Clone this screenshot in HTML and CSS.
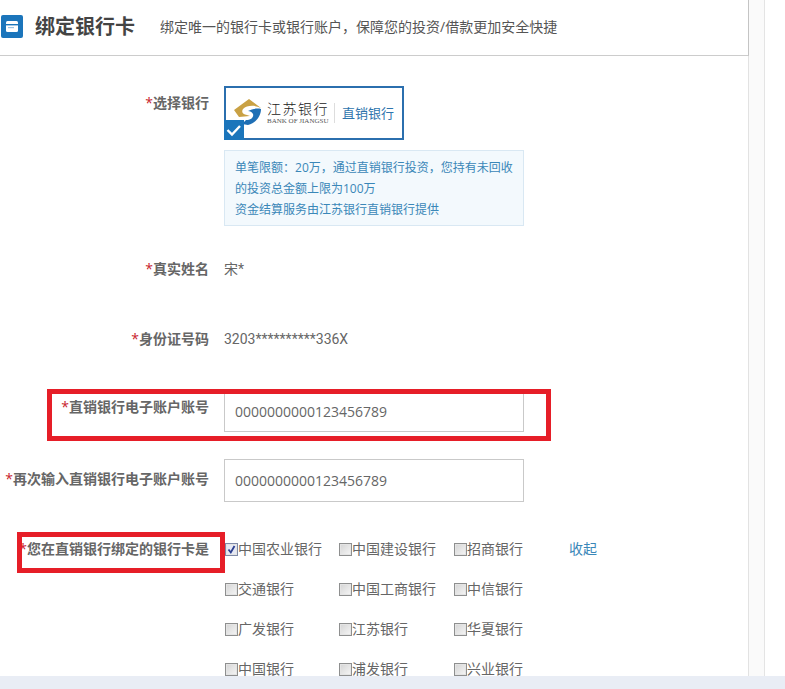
FILE: index.html
```html
<!DOCTYPE html>
<html lang="zh-CN">
<head>
<meta charset="utf-8">
<title>绑定银行卡</title>
<link rel="stylesheet" href="styles.css">
</head>
<body>
<div class="page">
  <div class="main">
    <section class="panel">
      <header class="head">
        <span class="head-icon">
          <svg width="22" height="23" viewBox="0 0 22 23"><rect width="22" height="23" rx="2" fill="#1b75bb"/><rect x="5" y="6" width="12" height="11" rx="1.5" fill="#fff"/><rect x="5" y="9" width="12" height="1.4" fill="#1b75bb"/><rect x="7" y="12" width="6" height="1.2" fill="#9cc4e4"/></svg>
        </span>
        <h1 class="title">绑定银行卡</h1>
        <p class="subtitle">绑定唯一的银行卡或银行账户<span class="punct">，</span>保障您的投资/借款更加安全快捷</p>
      </header>
      <form class="form">
        <div class="row row-bank">
          <div class="label label-bank"><i>*</i>选择银行</div>
          <div class="field">
            <div class="bank-card">
              <svg class="bank-logo" width="27" height="26" viewBox="0 0 27 26"><path d="M15 0 L27 9 C21 6 13 6 9 10 C7 13 9 16 13 16 L16 17 L5 18 L0 11 Z" fill="#c9a144"/><path d="M27 10 C27 17 22 24 14 26 L8 25 L12 21 C17 21 20 18 19 15 C18 13 16 12 14 12 C18 10 23 9 27 10 Z" fill="#1e6fb5"/></svg>
              <div class="bank-name">
                <span class="bank-cn">江苏银行</span>
                <span class="bank-en">BANK OF JIANGSU</span>
              </div>
              <span class="bank-type">直销银行</span>
              <span class="bank-check">
                <svg width="20" height="20" viewBox="0 0 20 20"><path d="M3.5 10 L8 14.5 L16 6" fill="none" stroke="#fff" stroke-width="2.4"/></svg>
              </span>
            </div>
            <div class="bank-info">单笔限额<span class="punct">：</span>20万<span class="punct">，</span>通过直销银行投资<span class="punct">，</span>您持有未回收<br>的投资总金额上限为100万<br>资金结算服务由江苏银行直销银行提供</div>
          </div>
        </div>
        <div class="row row-name">
          <div class="label"><i>*</i>真实姓名</div>
          <div class="value">宋*</div>
        </div>
        <div class="row row-id">
          <div class="label"><i>*</i>身份证号码</div>
          <div class="value">3203**********336X</div>
        </div>
        <div class="row row-acct">
          <div class="label label-acct"><i>*</i>直销银行电子账户账号</div>
          <input class="input input-first" type="text" value="0000000000123456789">
        </div>
        <div class="row row-again">
          <div class="label label-again"><i>*</i>再次输入直销银行电子账户账号</div>
          <input class="input" type="text" value="0000000000123456789">
        </div>
        <div class="row row-banks">
          <div class="label"><i>*</i>您在直销银行绑定的银行卡是</div>
          <div class="bank-grid">
            <label class="opt"><span class="box box-on"><svg width="11" height="11" viewBox="0 0 11 11"><path d="M2.5 5.5 L4.8 8.5 L8.5 2" fill="none" stroke="#2b3f8f" stroke-width="1.8"/></svg></span>中国农业银行</label>
            <label class="opt"><span class="box"></span>中国建设银行</label>
            <label class="opt"><span class="box"></span>招商银行</label>
            <a class="fold">收起</a>
            <label class="opt"><span class="box"></span>交通银行</label>
            <label class="opt"><span class="box"></span>中国工商银行</label>
            <label class="opt"><span class="box"></span>中信银行</label>
            <span></span>
            <label class="opt"><span class="box"></span>广发银行</label>
            <label class="opt"><span class="box"></span>江苏银行</label>
            <label class="opt"><span class="box"></span>华夏银行</label>
            <span></span>
            <label class="opt"><span class="box"></span>中国银行</label>
            <label class="opt"><span class="box"></span>浦发银行</label>
            <label class="opt"><span class="box"></span>兴业银行</label>
          </div>
        </div>
      </form>
    </section>
    <div class="gutter"></div>
  </div>
  <div class="foot"></div>
  <div class="mark mark-acct"></div>
  <div class="mark mark-banks"></div>
</div>
</body>
</html>
```
FILE: styles.css
```css
* { box-sizing: border-box; }
html, body { margin: 0; padding: 0; background: #fff; }
body {
  font-family: "Open Sans", "Noto Sans CJK SC", sans-serif;
  font-size: 14px;
  color: #666;
}
.punct { font-family: "Noto Sans CJK TC", sans-serif; }
.page {
  position: relative;
  width: 785px;
  height: 689px;
  overflow: hidden;
  display: flex;
  flex-direction: column;
}
.main { flex: 1; min-height: 0; display: flex; overflow: hidden; }
.panel { width: 749px; flex: none; border-right: 1px solid #e2e2e2; }
.gutter { width: 16px; flex: none; background: #fafafa; border-right: 1px solid #e4e4e4; }
.foot { height: 13px; flex: none; background: #e9edf5; }

.head {
  height: 56px;
  margin-right: -1px;
  display: flex;
  align-items: center;
  padding: 0 0 2px 1px;
  border-bottom: 1px solid #ccc;
  border-right: 1px solid #c4c4c4;
}
.head-icon { width: 22px; height: 23px; display: block; flex: none; }
.head-icon svg { display: block; }
.title { margin: 0 0 0 12px; font-size: 20px; font-weight: 700; line-height: 28px; color: #444; }
.subtitle { margin: 0 0 0 25px; font-size: 14px; line-height: 20px; color: #555; }

.row { display: flex; align-items: flex-start; }
.label {
  width: 209px;
  flex: none;
  text-align: right;
  line-height: 20px;
  font-weight: 700;
  color: #666;
  white-space: nowrap;
}
.label i { font-style: normal; color: #c8232c; font-weight: 400; }
.field, .value, .input, .bank-grid { margin-left: 15px; }
.value { font-family: Roboto, "Noto Sans CJK SC", sans-serif; line-height: 20px; color: #666; }

.row-bank { padding-top: 30px; }
.label-bank { margin-top: 7px; }
.bank-card {
  position: relative;
  width: 180px;
  height: 54px;
  border: 2px solid #2b6fae;
  display: flex;
  align-items: center;
  background: #fff;
}
.bank-logo { flex: none; margin: 0 0 2px 8px; }
.bank-name { display: flex; flex-direction: column; margin-left: 6px; width: 62px; flex: none; }
.bank-cn { font-size: 14px; line-height: 16px; letter-spacing: 1.5px; color: #222; font-weight: 300; white-space: nowrap; }
.bank-en { font-family: "Liberation Serif", serif; font-size: 7px; line-height: 9px; color: #555; white-space: nowrap; }
.bank-type {
  margin-left: 5px;
  padding-left: 7px;
  border-left: 1px solid #ddd;
  font-size: 13px;
  line-height: 20px;
  color: #2e74ad;
  white-space: nowrap;
}
.bank-check {
  position: absolute;
  left: -2px;
  bottom: -2px;
  width: 20px;
  height: 20px;
  background: #1b75bb;
}
.bank-check svg { display: block; }
.bank-info {
  width: 300px;
  height: 76px;
  margin-top: 10px;
  padding: 5px 10px 0;
  background: #f3f9fd;
  border: 1px solid #d9e8f3;
  font-size: 12px;
  line-height: 21px;
  color: #3a87b8;
  white-space: nowrap;
}

.row-name { padding-top: 33px; }
.row-id { padding-top: 50px; }
.row-acct { padding-top: 41px; }
.label-acct { margin-top: 7px; }
.row-again { padding-top: 27px; }
.label-again { margin-top: 10px; }
.input {
  width: 300px;
  height: 43px;
  padding: 0 10px;
  border: 1px solid #c9c9c9;
  background: #fff;
  font: inherit;
  color: #666;
  outline: none;
}
.input-first { height: 42px; }

.row-banks { padding-top: 37px; }
.bank-grid {
  display: grid;
  grid-template-columns: 114px 115px 116px auto;
  grid-auto-rows: 40px;
  align-items: start;
  line-height: 20px;
  white-space: nowrap;
}
.opt { display: flex; align-items: center; height: 20px; color: #666; }
.box {
  width: 13px;
  height: 13px;
  margin: 1px 0 0 1px;
  flex: none;
  border: 1px solid #8e8f8f;
  background: linear-gradient(135deg, #d4d4d4, #f6f6f6);
  box-shadow: inset 0 0 0 1px #e4e4e4;
  display: block;
}
.box-on { background: #e6e9f4; border-color: #7f8aa8; }
.box svg { display: block; }
.fold { color: #3a87b8; }

.mark { position: absolute; border: 5px solid #e61e28; }
.mark-acct { left: 47px; top: 389px; width: 504px; height: 52px; }
.mark-banks { left: 17px; top: 532px; width: 208px; height: 41px; }
```
